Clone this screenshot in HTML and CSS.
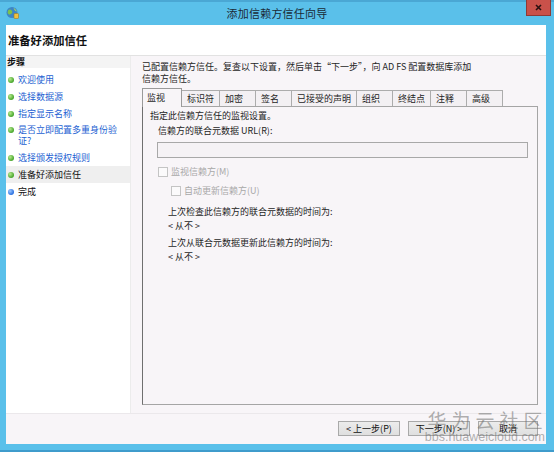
FILE: index.html
```html
<!DOCTYPE html>
<html lang="zh-CN">
<head>
<meta charset="utf-8">
<title>添加信赖方信任向导</title>
<link rel="stylesheet" href="styles.css">
</head>
<body>
<div class="window">
  <div class="titlebar">
    <div class="tb-left">
      <svg class="app-icon" width="13" height="13" viewBox="0 0 13 13">
        <circle cx="6" cy="6.5" r="5.5" fill="#3d86c6"/>
        <path d="M2 4.5 C3.5 3 5 3.5 6 5 C7 6.5 5.5 8 4 8.5 C3 9 2.2 8 1.6 7 Z" fill="#7cc150"/>
        <path d="M7.5 2 C9 2.5 10.5 4 10.8 5.5 C9.5 5.5 8.5 4.5 7.5 2 Z" fill="#9fd36b"/>
        <rect x="8" y="7.5" width="4.5" height="5" rx="0.8" fill="#f0c040" stroke="#a07820" stroke-width="0.6"/>
      </svg>
    </div>
    <div class="tb-title">添加信赖方信任向导</div>
    <div class="tb-right">
      <button class="close-btn" type="button" aria-label="关闭">
        <svg width="7" height="7" viewBox="0 0 7 7"><path d="M1 1 L6 6 M6 1 L1 6" stroke="#2a1010" stroke-width="1.6"/></svg>
      </button>
    </div>
  </div>

  <div class="client">
    <div class="header">准备好添加信任</div>

    <div class="body">
      <nav class="steps">
        <div class="steps-title">步骤</div>
        <ul class="step-list">
          <li class="step done"><span class="dot"></span><a>欢迎使用</a></li>
          <li class="step done"><span class="dot"></span><a>选择数据源</a></li>
          <li class="step done"><span class="dot"></span><a>指定显示名称</a></li>
          <li class="step done multi"><span class="dot"></span><a>是否立即配置多重身份验证?</a></li>
          <li class="step done"><span class="dot"></span><a>选择颁发授权规则</a></li>
          <li class="step current"><span class="dot"></span><span>准备好添加信任</span></li>
          <li class="step todo"><span class="dot"></span><span>完成</span></li>
        </ul>
      </nav>

      <main class="main">
        <p class="intro">已配置信赖方信任。复查以下设置，然后单击“下一步”，向 AD FS 配置数据库添加信赖方信任。</p>

        <div class="tabs">
          <div class="tab selected">监视</div>
          <div class="tab">标识符</div>
          <div class="tab">加密</div>
          <div class="tab">签名</div>
          <div class="tab">已接受的声明</div>
          <div class="tab">组织</div>
          <div class="tab">终结点</div>
          <div class="tab">注释</div>
          <div class="tab">高级</div>
        </div>

        <section class="panel">
          <div class="panel-lead">指定此信赖方信任的监视设置。</div>
          <div class="field-label">信赖方的联合元数据 URL(R):</div>
          <div class="textbox"></div>
          <label class="check disabled"><span class="box"></span>监视信赖方(M)</label>
          <label class="check disabled indent"><span class="box"></span>自动更新信赖方(U)</label>
          <div class="info">
            <div>上次检查此信赖方的联合元数据的时间为:</div>
            <div class="info-val">&lt; 从不 &gt;</div>
            <div class="info-gap">上次从联合元数据更新此信赖方的时间为:</div>
            <div class="info-val">&lt; 从不 &gt;</div>
          </div>
        </section>
      </main>
    </div>

    <div class="footer">
      <button class="btn" type="button">&lt; 上一步(P)</button>
      <button class="btn" type="button">下一步(N) &gt;</button>
      <button class="btn cancel" type="button">取消</button>
      <div class="watermark">
        <div class="wm-cn">华为云社区</div>
        <div class="wm-en">bbs.huaweicloud.com</div>
      </div>
    </div>
  </div>
</div>
</body>
</html>
```

FILE: styles.css
```css
* { box-sizing: border-box; }

html, body {
  margin: 0;
  padding: 0;
}

body {
  width: 554px;
  height: 452px;
  overflow: hidden;
  background: #5ac0ea;
  font-family: "Noto Sans CJK SC", "Noto Sans", sans-serif;
  font-size: 9px;
  color: #1e1e1e;
}

.window {
  display: flex;
  flex-direction: column;
  height: 452px;
  border-bottom: 2px solid #3f9ccc;
}

/* title bar */
.titlebar {
  height: 25px;
  flex: none;
  display: grid;
  grid-template-columns: 1fr auto 1fr;
  align-items: start;
  border-top: 2px solid #4aa7d4;
}

.tb-left {
  padding: 4px 0 0 6px;
}

.app-icon { display: block; }

.tb-title {
  font-size: 11px;
  line-height: 22px;
  color: #1b2a36;
  letter-spacing: 0.2px;
}

.tb-right {
  display: flex;
  justify-content: flex-end;
  padding-right: 3px;
}

.close-btn {
  width: 25px;
  height: 16px;
  margin-top: -2px;
  border: 1px solid #8e3a36;
  border-top: none;
  background: #c9514a;
  display: flex;
  align-items: center;
  justify-content: center;
  padding: 0;
}

.close-btn svg { display: block; }

/* client area */
.client {
  flex: 1;
  margin: 0 8px 6px 6px;
  background: #fff;
  display: flex;
  flex-direction: column;
  min-height: 0;
}

.header {
  height: 31px;
  flex: none;
  padding-left: 2px;
  font-size: 11.3px;
  font-weight: bold;
  line-height: 30px;
  color: #111;
  border-bottom: 1px solid #e2e2e2;
}

.body {
  flex: 1;
  display: flex;
  min-height: 0;
}

/* steps */
.steps {
  width: 125px;
  flex: none;
  background: #fff;
  border-right: 1px solid #ececec;
}

.steps-title {
  height: 12px;
  line-height: 12px;
  padding-left: 1px;
  font-weight: bold;
  color: #111;
  background: #f4f4f4;
}

.step-list {
  list-style: none;
  margin: 3px 0 0;
  padding: 0;
}

.step {
  display: flex;
  align-items: flex-start;
  min-height: 17px;
  line-height: 11px;
  padding: 3px 4px 3px 2px;
}

.step.multi {
  min-height: 27px;
  padding-top: 2px;
  padding-bottom: 3px;
}

.step a {
  color: #1d5fd2;
  cursor: pointer;
}

.step.current {
  background: #efefef;
  color: #111;
}

.step.todo { color: #111; }

.dot {
  width: 6px;
  height: 6px;
  flex: none;
  margin: 3px 4px 0 0;
  border-radius: 50%;
  background: radial-gradient(circle at 35% 35%, #b6ea8c, #47a52c 70%);
}

.step.todo .dot {
  background: radial-gradient(circle at 35% 35%, #9cc8ff, #2a6fe0 70%);
}

/* main pane */
.main {
  flex: 1;
  display: flex;
  flex-direction: column;
  min-width: 0;
  background: #f8f5f8;
  padding: 5px 8px 8px 11px;
}

.intro {
  margin: 0;
  line-height: 12px;
  width: 330px;
  color: #1e1e1e;
}

.tabs {
  display: flex;
  margin-top: 5px;
  padding-left: 1px;
  height: 16px;
  flex: none;
  align-items: flex-end;
}

.tab {
  height: 16px;
  min-width: 37px;
  padding: 0 5px;
  line-height: 15px;
  border: 1px solid #acacac;
  border-bottom: none;
  margin-right: -1px;
  background: #f3f0f3;
  color: #1e1e1e;
}

.tab.selected {
  position: relative;
  z-index: 1;
  height: 19px;
  min-width: 40px;
  margin-bottom: -1px;
  margin-left: -1px;
  padding-left: 4px;
  line-height: 17px;
  background: #f8f5f8;
  border-color: #9a9a9a;
}

.panel {
  flex: 1;
  border: 1px solid #a5a5a5;
  border-left-color: #6f6f6f;
  background: #f8f5f8;
  padding: 3px 9px 0 7px;
}

.panel-lead {
  line-height: 12px;
}

.field-label {
  margin: 3px 0 0 8px;
  line-height: 12px;
}

.textbox {
  height: 16px;
  margin: 5px 0 0 7px;
  border: 1px solid #a8a8a8;
  background: #f5f2f5;
}

.check {
  display: flex;
  align-items: center;
  height: 12px;
  line-height: 12px;
  margin: 8px 0 0 8px;
}

.check.indent {
  margin: 7px 0 0 21px;
}

.check.disabled { color: #a8a8a8; }

.box {
  width: 10px;
  height: 10px;
  margin-right: 3px;
  border: 1px solid #c4c4c4;
  background: #fbfafb;
  flex: none;
}

.info {
  margin: 9px 0 0 18px;
  line-height: 12px;
}

.info-val { margin-top: 2px; }

.info-gap { margin-top: 5px; }

/* footer */
.footer {
  position: relative;
  height: 31px;
  flex: none;
  display: flex;
  justify-content: flex-end;
  align-items: flex-start;
  gap: 8px;
  padding: 7px 8px 0 0;
  background: #f8f5f8;
  border-top: 1px solid #ebe8eb;
}

.btn {
  width: 62px;
  height: 15px;
  padding: 0;
  border: 1px solid #a9a9a9;
  background: linear-gradient(#ececec, #dfdfdf);
  font-family: "Noto Sans CJK SC", "Noto Sans", sans-serif;
  font-size: 9px;
  line-height: 12px;
  color: #111;
}

.btn.cancel { width: 60px; }

/* site watermark laid over the bottom-right corner */
.watermark {
  position: absolute;
  right: 1px;
  top: -5px;
  pointer-events: none;
  color: rgba(110, 110, 110, 0.55);
  text-align: center;
}

.wm-cn {
  font-size: 19px;
  line-height: 22px;
  letter-spacing: 5px;
  margin-right: -5px;
}

.wm-en {
  font-family: "Liberation Sans", Arial, sans-serif;
  font-size: 12.5px;
  line-height: 13px;
}
```
